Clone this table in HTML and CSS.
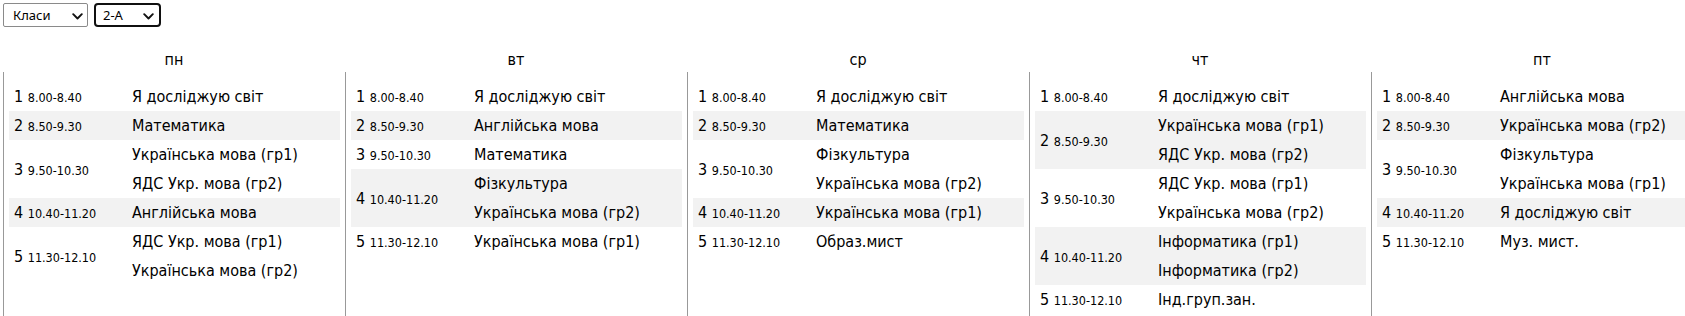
FILE: index.html
```html
<!DOCTYPE html>
<html lang="uk">
<head>
<meta charset="utf-8">
<title>Розклад 2-А</title>
<link rel="stylesheet" href="styles.css">
</head>
<body>
<div class="toolbar">
  <label class="picker picker-kind">
    <select class="sel"><option>Класи</option></select>
    <svg class="chev" width="11" height="7" viewBox="0 0 11 7" aria-hidden="true"><path d="M1.2 1.2 L5.5 5.5 L9.8 1.2" fill="none" stroke="#111" stroke-width="1.9" stroke-linecap="round" stroke-linejoin="round"/></svg>
  </label>
  <label class="picker picker-class is-focused">
    <select class="sel"><option>2-А</option></select>
    <svg class="chev" width="11" height="7" viewBox="0 0 11 7" aria-hidden="true"><path d="M1.2 1.2 L5.5 5.5 L9.8 1.2" fill="none" stroke="#111" stroke-width="1.9" stroke-linecap="round" stroke-linejoin="round"/></svg>
  </label>
</div>
<div class="week">
  <section class="day">
    <h2 class="day-name">пн</h2>
    <div class="day-body">
      <div class="lesson"><div class="slot"><span class="num">1</span> <span class="time">8.00-8.40</span></div><div class="subjects"><div class="subject">Я досліджую світ</div></div></div>
      <div class="lesson"><div class="slot"><span class="num">2</span> <span class="time">8.50-9.30</span></div><div class="subjects"><div class="subject">Математика</div></div></div>
      <div class="lesson"><div class="slot"><span class="num">3</span> <span class="time">9.50-10.30</span></div><div class="subjects"><div class="subject">Українська мова (гр1)</div><div class="subject">ЯДС Укр. мова (гр2)</div></div></div>
      <div class="lesson"><div class="slot"><span class="num">4</span> <span class="time">10.40-11.20</span></div><div class="subjects"><div class="subject">Англійська мова</div></div></div>
      <div class="lesson"><div class="slot"><span class="num">5</span> <span class="time">11.30-12.10</span></div><div class="subjects"><div class="subject">ЯДС Укр. мова (гр1)</div><div class="subject">Українська мова (гр2)</div></div></div>
    </div>
  </section>
  <section class="day">
    <h2 class="day-name">вт</h2>
    <div class="day-body">
      <div class="lesson"><div class="slot"><span class="num">1</span> <span class="time">8.00-8.40</span></div><div class="subjects"><div class="subject">Я досліджую світ</div></div></div>
      <div class="lesson"><div class="slot"><span class="num">2</span> <span class="time">8.50-9.30</span></div><div class="subjects"><div class="subject">Англійська мова</div></div></div>
      <div class="lesson"><div class="slot"><span class="num">3</span> <span class="time">9.50-10.30</span></div><div class="subjects"><div class="subject">Математика</div></div></div>
      <div class="lesson"><div class="slot"><span class="num">4</span> <span class="time">10.40-11.20</span></div><div class="subjects"><div class="subject">Фізкультура</div><div class="subject">Українська мова (гр2)</div></div></div>
      <div class="lesson"><div class="slot"><span class="num">5</span> <span class="time">11.30-12.10</span></div><div class="subjects"><div class="subject">Українська мова (гр1)</div></div></div>
    </div>
  </section>
  <section class="day">
    <h2 class="day-name">ср</h2>
    <div class="day-body">
      <div class="lesson"><div class="slot"><span class="num">1</span> <span class="time">8.00-8.40</span></div><div class="subjects"><div class="subject">Я досліджую світ</div></div></div>
      <div class="lesson"><div class="slot"><span class="num">2</span> <span class="time">8.50-9.30</span></div><div class="subjects"><div class="subject">Математика</div></div></div>
      <div class="lesson"><div class="slot"><span class="num">3</span> <span class="time">9.50-10.30</span></div><div class="subjects"><div class="subject">Фізкультура</div><div class="subject">Українська мова (гр2)</div></div></div>
      <div class="lesson"><div class="slot"><span class="num">4</span> <span class="time">10.40-11.20</span></div><div class="subjects"><div class="subject">Українська мова (гр1)</div></div></div>
      <div class="lesson"><div class="slot"><span class="num">5</span> <span class="time">11.30-12.10</span></div><div class="subjects"><div class="subject">Образ.мист</div></div></div>
    </div>
  </section>
  <section class="day">
    <h2 class="day-name">чт</h2>
    <div class="day-body">
      <div class="lesson"><div class="slot"><span class="num">1</span> <span class="time">8.00-8.40</span></div><div class="subjects"><div class="subject">Я досліджую світ</div></div></div>
      <div class="lesson"><div class="slot"><span class="num">2</span> <span class="time">8.50-9.30</span></div><div class="subjects"><div class="subject">Українська мова (гр1)</div><div class="subject">ЯДС Укр. мова (гр2)</div></div></div>
      <div class="lesson"><div class="slot"><span class="num">3</span> <span class="time">9.50-10.30</span></div><div class="subjects"><div class="subject">ЯДС Укр. мова (гр1)</div><div class="subject">Українська мова (гр2)</div></div></div>
      <div class="lesson"><div class="slot"><span class="num">4</span> <span class="time">10.40-11.20</span></div><div class="subjects"><div class="subject">Інформатика (гр1)</div><div class="subject">Інформатика (гр2)</div></div></div>
      <div class="lesson"><div class="slot"><span class="num">5</span> <span class="time">11.30-12.10</span></div><div class="subjects"><div class="subject">Інд.груп.зан.</div></div></div>
    </div>
  </section>
  <section class="day">
    <h2 class="day-name">пт</h2>
    <div class="day-body">
      <div class="lesson"><div class="slot"><span class="num">1</span> <span class="time">8.00-8.40</span></div><div class="subjects"><div class="subject">Англійська мова</div></div></div>
      <div class="lesson"><div class="slot"><span class="num">2</span> <span class="time">8.50-9.30</span></div><div class="subjects"><div class="subject">Українська мова (гр2)</div></div></div>
      <div class="lesson"><div class="slot"><span class="num">3</span> <span class="time">9.50-10.30</span></div><div class="subjects"><div class="subject">Фізкультура</div><div class="subject">Українська мова (гр1)</div></div></div>
      <div class="lesson"><div class="slot"><span class="num">4</span> <span class="time">10.40-11.20</span></div><div class="subjects"><div class="subject">Я досліджую світ</div></div></div>
      <div class="lesson"><div class="slot"><span class="num">5</span> <span class="time">11.30-12.10</span></div><div class="subjects"><div class="subject">Муз. мист.</div></div></div>
    </div>
  </section>
</div>
</body>
</html>
```

FILE: styles.css
```css
html, body {
  overflow: hidden;
  height: 100%;
}

body {
  margin: 0;
  padding: 3px 0 0 3px;
  background: #fff;
  color: #000;
  font-family: "DejaVu Sans Condensed", "DejaVu Sans", sans-serif;
  font-stretch: condensed;
  font-size: 16px;
}

.toolbar {
  display: flex;
  gap: 6px;
  height: 24px;
}

.picker {
  position: relative;
  display: block;
  height: 24px;
}

.picker-kind {
  width: 85px;
}

.picker-class {
  width: 67px;
}

.sel {
  -webkit-appearance: none;
  appearance: none;
  box-sizing: border-box;
  display: block;
  width: 100%;
  height: 24px;
  margin: 0;
  padding: 0 20px 0 9px;
  font-family: "Noto Sans", "Open Sans", sans-serif;
  font-stretch: normal;
  font-size: 13px;
  color: #000;
  background-color: #fff;
  border: 1px solid #8a8a8a;
  border-radius: 2px;
  outline: none;
}

.is-focused .sel {
  border: 2px solid #101010;
  border-radius: 4px;
  padding-left: 7px;
}

.chev {
  position: absolute;
  top: 10px;
  right: 5px;
  pointer-events: none;
}

.is-focused .chev {
  right: 7px;
}

.week {
  display: flex;
  overflow: hidden;
}

.day {
  flex: 0 0 342px;
  display: flex;
  flex-direction: column;
}

.day-name {
  margin: 23px 0 2px;
  height: 20px;
  font-size: 16px;
  font-weight: normal;
  line-height: 20px;
  text-align: center;
}

.day-body {
  border-left: 1px solid #999;
  padding: 10px 5px 0;
  min-height: 234px;
}

.lesson {
  display: grid;
  grid-template-columns: 118px 1fr;
  align-items: center;
}

.lesson:nth-child(even) {
  background: #f2f2f2;
}

.slot {
  padding-left: 5px;
  white-space: nowrap;
}

.num {
  font-size: 16px;
}

.time {
  font-size: 12.5px;
}

.subjects {
  padding-left: 5px;
}

.subject {
  height: 29px;
  line-height: 29px;
  white-space: nowrap;
}
```
